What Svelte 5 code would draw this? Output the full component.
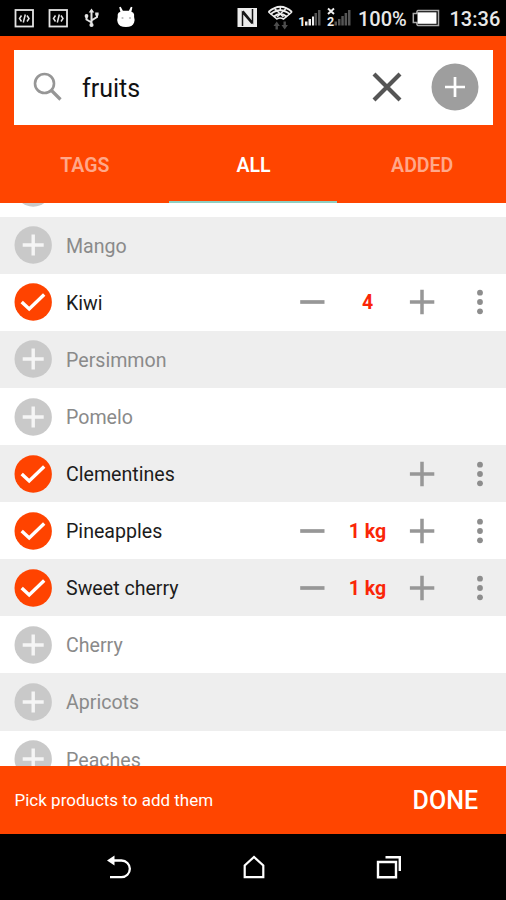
<script lang="ts">
	type Product = { name: string; picked: boolean; qty?: string };

	let query = $state('fruits');
	let active = $state('ALL');
	const tabs = ['TAGS', 'ALL', 'ADDED'];

	let products: Product[] = $state([
		{ name: '', picked: false },
		{ name: 'Mango', picked: false },
		{ name: 'Kiwi', picked: true, qty: '4' },
		{ name: 'Persimmon', picked: false },
		{ name: 'Pomelo', picked: false },
		{ name: 'Clementines', picked: true },
		{ name: 'Pineapples', picked: true, qty: '1 kg' },
		{ name: 'Sweet cherry', picked: true, qty: '1 kg' },
		{ name: 'Cherry', picked: false },
		{ name: 'Apricots', picked: false },
		{ name: 'Peaches', picked: false }
	]);
</script>

<div class="screen">
	<div class="status">
		<svg class="status-left" width="140" height="36" viewBox="0 0 140 36">
			<g fill="none" stroke="#e4e4e4" stroke-width="1.8">
				<rect x="15.5" y="10" width="17.5" height="16.5" />
				<rect x="49.5" y="10" width="17.5" height="16.5" />
				<path stroke-width="1.5" d="M21.5 15.5l-2 3 2 3M27 15.5l2 3-2 3M25.3 14.5l-2 8M55.5 15.5l-2 3 2 3M61 15.5l2 3-2 3M59.3 14.5l-2 8" />
				<path stroke-width="2" d="M91.5 11v14M91.5 22.5l-5-3v-3M91.5 20.5l5.5-3.5v-3" />
			</g>
			<g fill="#e4e4e4">
				<path d="M91.5 8.500l2.800 4h-5.600zM95.200 12.500h3.400v3h-3.400z" />
				<circle cx="86.5" cy="16" r="1.9" />
				<circle cx="91.5" cy="25" r="2.100" />
			</g>
			<path fill="#fff" d="M119.200 7.200l1.500-.5 2.200 4h6l2-4 1.500.5-1 4.600q2.500.7 2.700 2.700v2.500q1 3 0 5.500-1.500 4.500-8.200 4.500t-8.200-4.500q-1-2.500 0-5.500v-2.500q.3-2 2.700-2.700z" />
			<circle cx="122.500" cy="18" r="1.100" fill="#bbb" />
			<circle cx="130" cy="18" r="1.100" fill="#bbb" />
		</svg>
		<svg class="status-signal" width="115" height="36" viewBox="237 0 115 36">
			<path fill="#ececec" d="M237.500 8H257v19h-19.500z" />
			<path fill="none" stroke="#151515" stroke-width="1.500" d="M242.500 26V12.500L252 23.500M252.500 9v13.500L243 11" />
			<g fill="none" stroke="#ededed" stroke-width="1.800">
				<path d="M268.500 12q12-10.500 23.500 0M270.500 14.300q9.500-8 19.500 0M273.500 16.800q6.500-5.500 13.500 0" />
				<path stroke-width="1.500" d="M268.500 12l8.500 7q3-2 6.500 0l8.500-7M274 8l9.500 9M286.500 8l-9.500 9M280.300 7v4" />
			</g>
			<path fill="#4d4d4d" d="M273.500 26l3.200-4.500 3.200 4.500h-2v3.500h-2.400v-3.500zM281.500 25h2v-3.500h2.400v3.500h2l-3.200 4.500z" />
			<text x="298.300" y="25.500" font-size="12.500" font-weight="700" fill="#eee">1</text>
			<path fill="#eee" d="M305 21.500h2.500v4h-2.500zM308.500 19h2.500v6.500h-2.500zM312 16.500h2v9h-2z" />
			<path fill="#555" d="M314.500 13h2.500v12.500h-2.500zM318 10h2.500v15.500h-2.500zM334.500 21.500h2.500v4h-2.500zM338 19h2.500v6.500h-2.500zM341.300 16h2.500v9.500h-2.500zM344.600 13h2.500v12.500h-2.500zM348 10h2.500v15.500h-2.500z" />
			<path fill="none" stroke="#eee" stroke-width="1.900" d="M328 8.500l6 5.500M334 8.500l-6 5.500" />
			<text x="327" y="25.500" font-size="12.500" font-weight="700" fill="#eee">2</text>
		</svg>
		<span class="percent">100%</span>
		<svg class="battery" width="30" height="36" viewBox="411 0 30 36">
			<path fill="none" stroke="#aaa" stroke-width="1.500" d="M418 10.500h20.500v15H418q-1.200 0-1.200-3h-3.500v-9h3.500q0-3 1.200-3z" />
			<path fill="#fff" d="M417.500 12.300h19v11.500h-19z" />
		</svg>
		<span class="clock">13:36</span>
	</div>

	<header>
		<div class="search">
			<svg class="lens" width="30" height="30" viewBox="0 0 30 30" fill="none" stroke="#969696">
				<circle cx="11.500" cy="11.500" r="9.500" stroke-width="2.600" />
				<path d="M18.500 18.500l9 9" stroke-width="3.200" />
			</svg>
			<input bind:value={query} aria-label="Search" />
			<button class="clear" aria-label="Clear" onclick={() => (query = '')}>
				<svg width="32" height="32" viewBox="0 0 32 32">
					<path d="M3 3l26 26M29 3l-26 26" stroke="#555" stroke-width="4.200" />
				</svg>
			</button>
			<button aria-label="Add">
				<svg width="48" height="48" viewBox="0 0 48 48">
					<circle cx="24" cy="24" r="23.500" fill="#9e9e9e" />
					<path d="M24 14v20M14 24h20" stroke="#fff" stroke-width="2.700" />
				</svg>
			</button>
		</div>
		<nav>
			{#each tabs as tab}
				<button class="tab" class:active={active === tab} onclick={() => (active = tab)}>{tab}</button>
			{/each}
		</nav>
	</header>

	<main>
		<ul>
			{#each products as product}
				<li class:picked={product.picked}>
					<svg class="mark" width="38" height="38" viewBox="0 0 38 38">
						{#if product.picked}
							<circle cx="19.200" cy="19" r="18.700" fill="#ff4300" />
							<path d="M7.700 19l7.500 7 15-14.500" fill="none" stroke="#fff" stroke-width="3.400" />
						{:else}
							<circle cx="19.200" cy="19" r="18.700" fill="#c9c9c9" />
							<path d="M19.200 8.500v21M8.700 19h21" stroke="#f5f5f5" stroke-width="3.400" />
						{/if}
					</svg>
					<span class="name">{product.name}</span>
					{#if product.picked}
						{#if product.qty}
							<svg width="26" height="26" viewBox="0 0 26 26">
								<path d="M1.200 13h24.300" stroke="#979797" stroke-width="3.700" />
							</svg>
							<span class="qty">{product.qty}</span>
						{/if}
						<svg width="26" height="26" viewBox="0 0 26 26">
							<path d="M.9 13h24.400M13 .8v24.400" stroke="#979797" stroke-width="3.500" />
						</svg>
						<svg class="more" width="8" height="26" viewBox="0 0 8 26" fill="#8d8d8d">
							<circle cx="4" cy="3.700" r="2.900" />
							<circle cx="4" cy="13" r="2.900" />
							<circle cx="4" cy="22.300" r="2.900" />
						</svg>
					{/if}
				</li>
			{/each}
		</ul>
	</main>

	<footer>
		<span class="hint">Pick products to add them</span>
		<button class="done">DONE</button>
	</footer>

	<div class="sysnav">
		<svg width="26" height="26" viewBox="0 0 26 26" fill="none" stroke="#fff" stroke-width="2.300">
			<path d="M7 6.500h8.500a8.200 8.200 0 0 1 0 16.700H4" />
			<path d="M1 6.500L8.500 1.500v10z" fill="#fff" stroke="none" />
		</svg>
		<svg width="26" height="26" viewBox="0 0 26 26" fill="none" stroke="#fff" stroke-width="2.200">
			<path d="M3.700 23.200V11.500L13 3l9.300 8.500v11.700z" />
		</svg>
		<svg width="26" height="26" viewBox="0 0 26 26" fill="none" stroke="#fff" stroke-width="2.400">
			<path d="M2 8h18v15.300H2zM9.500 3.200h14.300V17" />
		</svg>
	</div>
</div>

<style>
	:global(body) {
		margin: 0;
	}

	.screen {
		display: flex;
		flex-direction: column;
		width: 506px;
		height: 900px;
		overflow: hidden;
		background: #fff;
		font-family: Roboto, sans-serif;
	}

	svg {
		display: block;
		flex-shrink: 0;
	}

	button {
		border: 0;
		padding: 0;
		background: none;
		font-family: inherit;
		color: inherit;
	}

	/* Status bar */
	.status {
		display: flex;
		align-items: center;
		height: 35.6px;
		flex-shrink: 0;
		background: #000;
		color: #e8e8e8;
		font-size: 20px;
		font-weight: 500;
		white-space: nowrap;
	}
	.status-left { margin-right: 97px; }
	.status-signal { margin-right: 6px; }
	.percent { width: 53px; padding-top: 2px; }
	.battery { margin-right: 8.5px; }
	.clock { padding-top: 2px; }

	/* Search and tabs */
	header {
		display: flex;
		flex-direction: column;
		height: 167.4px;
		flex-shrink: 0;
		padding-top: 14px;
		box-sizing: border-box;
		background: #ff4500;
	}
	.search {
		display: flex;
		align-items: center;
		height: 75.5px;
		margin: 0 13px 0 14px;
		padding: 0 14px 0 19px;
		background: #fff;
	}
	.lens { margin-right: 19px; }
	input {
		flex: 1;
		min-width: 0;
		padding: 2px 0 0;
		border: 0;
		outline: 0;
		background: none;
		color: #111;
		font: 25px Roboto, sans-serif;
	}
	.clear { margin-right: 28px; }

	nav {
		display: flex;
		flex: 1;
	}
	.tab {
		flex: 1;
		padding: 5px 0 0 1px;
		border-bottom: 2.5px solid transparent;
		color: #ffa88a;
		font-size: 19.5px;
		font-weight: 600;
	}
	.tab.active {
		border-color: #8ecfc2;
		color: #fff;
	}

	/* Products */
	main {
		height: 562.6px;
		flex-shrink: 0;
		overflow: hidden;
	}
	ul {
		margin: -43.4px 0 0;
		padding: 0;
		list-style: none;
	}
	li {
		display: flex;
		align-items: center;
		height: 57.1px;
		box-sizing: border-box;
		padding: 0 22px 0 14px;
		color: #8a8a8a;
		font-size: 19.6px;
	}
	li:nth-child(even) { background: #eee; }
	li.picked { color: #1c1c1c; }
	.name {
		flex: 1;
		margin-left: 14px;
		padding-top: 2px;
	}
	.qty {
		width: 84px;
		padding: 1px 0 0 1px;
		box-sizing: border-box;
		color: #fa2608;
		font-size: 19.5px;
		font-weight: 700;
		text-align: center;
	}
	.more { margin-left: 41px; }

	/* Bottom bars */
	footer {
		display: flex;
		align-items: center;
		justify-content: space-between;
		height: 68px;
		flex-shrink: 0;
		padding: 0 28px 0 14.5px;
		background: #ff4500;
		color: #fff;
	}
	.hint { font-size: 17px; }
	.done {
		padding-top: 1px;
		font-size: 25px;
		font-weight: 500;
	}
	.sysnav {
		display: flex;
		align-items: center;
		justify-content: center;
		gap: 109px;
		flex: 1;
		padding-left: 1px;
		background: #000;
	}
</style>
